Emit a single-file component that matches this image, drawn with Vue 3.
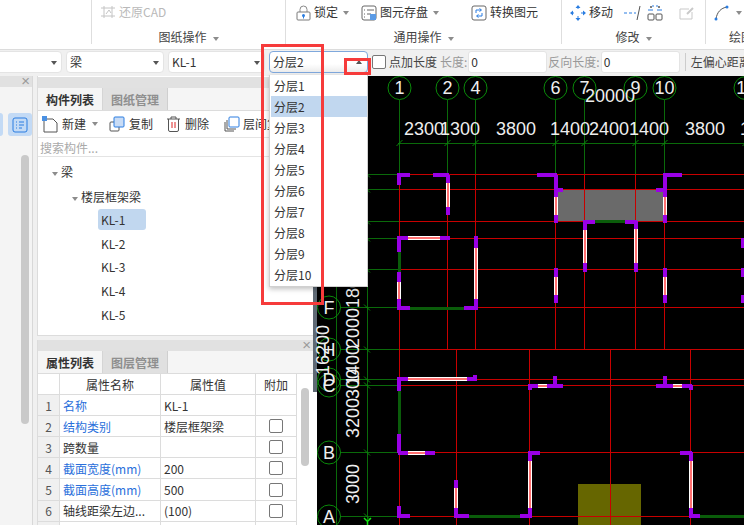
<script setup>
const floors = ['分层1','分层2','分层3','分层4','分层5','分层6','分层7','分层8','分层9','分层10']
const props = [
  { n: 1, name: '名称', value: 'KL-1', blue: true, check: false },
  { n: 2, name: '结构类别', value: '楼层框架梁', blue: true, check: true },
  { n: 3, name: '跨数量', value: '', blue: false, check: true },
  { n: 4, name: '截面宽度(mm)', value: '200', blue: true, check: true },
  { n: 5, name: '截面高度(mm)', value: '500', blue: true, check: true },
  { n: 6, name: '轴线距梁左边...', value: '(100)', blue: false, check: true },
  { n: 7, name: '', value: '', blue: false, check: false },
]
const beams = ['KL-2','KL-3','KL-4','KL-5']

const topAxes = [[399.5,'1'],[447.5,'2'],[475.5,'4'],[555.5,'6'],[584.5,'7'],[635.5,'9'],[664.5,'10'],[745.5,'11']]
const sideAxes = [[307.5,'F'],[349.5,'H'],[379.5,'D'],[385.5,'C'],[452.5,'B'],[516.5,'A']]
const hLines = [174.5,189.5,221.5,238.5,269.5,307.5,349.5,379.5,385.5,452.5,516.5]
const redV = [[447.5,175,350],[475.5,175,350],[555.5,175,350],[584.5,175,350],[635.5,175,350],[664.5,175,350],[399.5,175,525],[456.5,350,525],[529.5,350,525],[610.5,350,525],[690.5,350,525]]
const dims = [[404,'2300'],[440,'1300'],[496,'3800'],[550,'1400'],[589,'2400'],[629,'1400'],[685,'3800'],[740,'1']]
const sideDims = [[352,288,'1800'],[352,328,'2000'],[352,365,'1400'],[352,384,'300'],[352,418,'3200'],[352,484,'3000'],[322,350,'16200']]

const P = (a,b,c,d) => ({ a,b,c,d,t:'p' })
const W = (a,b,c,d) => ({ a,b,c,d,t:'w' })
const G = (a,b,c,d) => ({ a,b,c,d,t:'g' })
const walls = [
  G(399,252,399,272), G(410,308,464,308), G(595,221.5,625,221.5), G(399,391,399,434), G(469,516,520,516), G(700,516,744,516),
  W(447.5,183,447.5,207), W(555.5,197,555.5,215), W(664.5,197,664.5,215), W(584.5,230,584.5,263), W(635.5,229,635.5,263),
  W(408,238,440,238), W(475.5,248,475.5,299), W(399,282,399,299), W(555.5,277,555.5,295), W(664.5,277,664.5,295),
  W(408,379,467,379), W(408,452.5,425,452.5), W(456,488,456,508), W(529.5,461,529.5,508), W(690.5,461,690.5,508),
  W(538,385.5,547,385.5), W(673,385.5,682,385.5),
  P(397,175,410,175), P(399,175,399,185), P(433,175,449,175), P(447.5,175,447.5,183), P(447.5,207,447.5,215),
  P(537,175,557,175), P(555.5,175,555.5,197), P(555,189.5,563,189.5), P(555.5,215,555.5,223),
  P(663,175,682,175), P(664.5,175,664.5,197), P(656,189.5,666,189.5), P(664.5,215,664.5,223),
  P(583,221.5,595,221.5), P(625,221.5,637,221.5), P(584.5,221,584.5,230), P(584.5,263,584.5,272), P(635.5,221,635.5,229), P(635.5,263,635.5,272),
  P(397,238,408,238), P(440,238,450,238), P(399,238,399,252), P(399,272,399,282), P(399,299,399,310), P(397,308,410,308), P(464,308,477,308),
  P(475.5,236,475.5,248), P(475.5,299,475.5,310), P(555.5,268,555.5,277), P(555.5,295,555.5,303), P(664.5,268,664.5,277), P(664.5,295,664.5,303),
  P(743,238,743,248), P(743,268,743,277), P(743,295,743,303),
  P(397,379,408,379), P(467,379,477,379), P(475,375,475,379), P(399,377,399,391), P(399,434,399,453), P(398,452.5,408,452.5), P(425,452.5,435,452.5),
  P(528,385.5,538,385.5), P(547,385.5,563,385.5), P(555,376,555,385), P(529.5,385,529.5,390),
  P(656,385.5,673,385.5), P(682,385.5,692,385.5), P(664.5,376,664.5,385), P(690.5,385,690.5,390),
  P(399,506,399,518), P(398,516,410,516), P(456,480,456,488), P(456,508,456,518), P(455,516,469,516), P(520,516,532,516),
  P(528,452.5,540,452.5), P(529.5,452,529.5,461), P(529.5,508,529.5,518),
  P(680,452.5,692,452.5), P(690.5,452,690.5,461), P(690.5,508,690.5,518), P(689,516,700,516),
]
</script>

<template>
  <div class="page">
    <header class="ribbon">
      <section class="group g1"></section>
      <section class="group g2">
        <div class="tools">
          <span class="tool muted">
            <svg width="16" height="14" viewBox="0 0 16 14"><path d="M1 3h14M4 1v12M1 11h14M12 1v12" fill="none" stroke="#c4c4c4"/><path d="M6 9l3-4 2 3" fill="none" stroke="#c4c4c4"/></svg>
            还原CAD
          </span>
        </div>
        <div class="glabel">图纸操作<i class="tri"></i></div>
      </section>
      <section class="group g3">
        <div class="tools">
          <span class="tool t-lock">
            <svg width="15" height="16" viewBox="0 0 15 16"><path d="M4 7V4.500a3.500 3.500 0 0 1 7 0V7" fill="none" stroke="#8a8a8a"/><rect x="1" y="7" width="13" height="8" rx="1" fill="#fff" stroke="#7a7a7a"/><circle cx="7.500" cy="10.500" r="1.500" fill="#2a7de1"/><path d="M7.500 11v2.500" stroke="#2a7de1"/></svg>
            锁定<i class="tri"></i>
          </span>
          <span class="tool t-save">
            <svg width="16" height="16" viewBox="0 0 16 16"><rect x="1" y="1" width="14" height="14" rx="2" fill="#fff" stroke="#666"/><path d="M3 5h1M6 5h7M3 9h1M6 9h4M3 12h1" stroke="#666"/><rect x="9" y="9" width="6" height="6" fill="#5b9be6"/></svg>
            图元存盘<i class="tri"></i>
          </span>
          <span class="tool t-conv">
            <svg width="16" height="16" viewBox="0 0 16 16"><rect x="1" y="1" width="14" height="14" rx="2" fill="#fff" stroke="#666"/><path d="M5 8V5h5M8.500 3.500L10.500 5 8.500 6.500M11 8v3H6M7.500 9.500L5.500 11l2 1.500" fill="none" stroke="#2a7de1"/></svg>
            转换图元
          </span>
        </div>
        <div class="glabel">通用操作<i class="tri"></i></div>
      </section>
      <section class="group g4">
        <div class="tools">
          <span class="tool t-move">
            <svg width="16" height="16" viewBox="0 0 16 16"><path d="M8 2v3M8 11v3M2 8h3M11 8h3" stroke="#2a7de1" stroke-dasharray="2 1"/><path d="M8 0l2.500 3h-5zM8 16l2.500-3h-5zM0 8l3-2.500v5zM16 8l-3-2.500v5z" fill="#2a7de1"/></svg>
            移动
          </span>
          <svg class="t-trim" width="17" height="16" viewBox="0 0 17 16"><path d="M0 8h3M5 8h3M10 8h2" stroke="#2a7de1"/><path d="M16 1L13 15" stroke="#555"/></svg>
          <svg class="t-arr" width="16" height="16" viewBox="0 0 16 16"><rect x="1" y="9" width="6" height="6" rx="1" fill="none" stroke="#555"/><rect x="9" y="9" width="6" height="6" rx="1" fill="none" stroke="#555"/><circle cx="4" cy="2" r="1" fill="#555"/><circle cx="12" cy="2" r="1" fill="#555"/><path d="M1 5h5M10 5h5M6 0v2M10 0v2" stroke="#2a7de1"/></svg>
          <svg class="t-note" width="16" height="14" viewBox="0 0 16 14"><path d="M10 3H1v10h12V6" fill="none" stroke="#c9c9c9"/><path d="M8 8l6-6" stroke="#c9c9c9" stroke-width="2"/></svg>
        </div>
        <div class="glabel">修改<i class="tri"></i></div>
      </section>
      <section class="group g5">
        <div class="tools">
          <svg width="16" height="16" viewBox="0 0 16 16"><path d="M2 14C3 7 7 3 13 2" fill="none" stroke="#555"/><circle cx="2" cy="14" r="1.500" fill="#2a7de1"/><circle cx="13" cy="2" r="1.500" fill="#2a7de1"/></svg>
          <i class="tri"></i>
        </div>
        <div class="glabel left">绘图</div>
      </section>
    </header>

    <div class="optbar">
      <div class="sel s0"><i class="tri dark"></i></div>
      <div class="sel s1">梁<i class="tri dark"></i></div>
      <div class="sel s2">KL-1<i class="tri dark"></i></div>
      <div class="sel s3">分层2<i class="tri dark up"></i></div>
      <span class="chk optchk"></span>
      <span class="o-text">点加长度</span>
      <span class="o-gray">长度:</span>
      <div class="num">0</div>
      <span class="o-gray">反向长度:</span>
      <div class="num">0</div>
      <span class="osep"></span>
      <span class="o-text">左偏心距离</span>
    </div>

    <main class="main">
      <aside class="panel-a">
        <div class="phead"><span class="x">×</span></div>
        <div class="a-tools"><span class="a-btn edge"></span><span class="a-btn">
          <svg width="16" height="16" viewBox="0 0 16 16"><rect x="1" y="1" width="14" height="14" rx="2" fill="none" stroke="#2a7de1"/><path d="M4 5h1M7 5h5M4 8h1M7 8h5M4 11h1M7 11h3" stroke="#2a7de1"/></svg>
        </span></div>
        <div class="a-body"><span class="a-thumb"></span></div>
      </aside>

      <div class="col">
        <section class="panel top">
          <div class="phead"></div>
          <div class="tabs"><span class="tab on">构件列表</span><span class="tab">图纸管理</span></div>
          <div class="ptools">
            <span class="pt pt-new">
              <svg width="17" height="17" viewBox="0 0 17 17"><path d="M2 3h9l4 4v9H2z" fill="#fff" stroke="#555"/><rect x="0" y="0" width="5" height="5" fill="#4a90e2"/></svg>
              新建<i class="tri"></i>
            </span>
            <span class="pt pt-copy">
              <svg width="16" height="16" viewBox="0 0 16 16"><rect x="1" y="6" width="9" height="9" rx="1" fill="#fff" stroke="#555"/><rect x="5" y="1" width="10" height="10" rx="1" fill="#c9dcf5" stroke="#2a7de1"/></svg>
              复制
            </span>
            <span class="pt pt-del">
              <svg width="15" height="16" viewBox="0 0 15 16"><path d="M1 3h13M5 3V1h5v2" fill="none" stroke="#555"/><path d="M2.500 3v11a1.500 1.500 0 0 0 1.500 1.500h7a1.500 1.500 0 0 0 1.500-1.500V3" fill="none" stroke="#555"/><path d="M6 6v6M9 6v6" stroke="#d22"/></svg>
              删除
            </span>
            <span class="pt pt-layer">
              <svg width="16" height="16" viewBox="0 0 16 16"><path d="M1 6v9h9" fill="none" stroke="#555"/><path d="M3 4v9h9" fill="none" stroke="#555"/><rect x="5" y="1" width="10" height="10" rx="1" fill="#fff" stroke="#2a7de1"/></svg>
              层间复制
            </span>
          </div>
          <div class="search">搜索构件...</div>
          <div class="tree">
            <div class="node n1"><i class="tri"></i>梁</div>
            <div class="node n2"><i class="tri"></i>楼层框架梁</div>
            <div class="node n3 sel-node"><span>KL-1</span></div>
            <div v-for="b in beams" :key="b" class="node n3"><span>{{ b }}</span></div>
          </div>
        </section>

        <section class="panel bottom">
          <div class="phead"><span class="x">×</span></div>
          <div class="tabs"><span class="tab on">属性列表</span><span class="tab">图层管理</span></div>
          <div class="tablewrap">
            <div class="ptable">
              <div class="row head">
                <span class="c idx"></span><span class="c name">属性名称</span><span class="c val">属性值</span><span class="c add txt">附加</span>
              </div>
              <div v-for="p in props" :key="p.n" class="row">
                <span class="c idx">{{ p.n }}</span>
                <span class="c name left" :class="{ blue: p.blue }">{{ p.name }}</span>
                <span class="c val left">{{ p.value }}</span>
                <span class="c add"><span v-if="p.check" class="chk"></span></span>
              </div>
            </div>
            <div class="vbar"><span class="vthumb"></span></div>
          </div>
        </section>
      </div>

      <div class="strip"><span class="strip-top"></span></div>

      <div class="canvas">
        <svg class="cad" width="427" height="449" viewBox="317 76 427 449">
          <rect x="557" y="190" width="107" height="31" fill="#6a6a6a" />
          <rect x="578" y="484" width="63" height="41" fill="#666600" />

          <g stroke="#0a6a0a" stroke-width="1" shape-rendering="crispEdges">
            <path d="M336.500 76V525M367.500 76V525M398 143.500H744" />
            <line v-for="a in topAxes" :key="'tv'+a[1]" :x1="a[0]" :x2="a[0]" y1="100" y2="175" />
            <line v-for="y in hLines" :key="'hg'+y" x1="340" x2="399" :y1="y" :y2="y" />
          </g>
          <g stroke="#0a8a0a" stroke-width="1">
            <line v-for="a in topAxes" :key="'tk'+a[1]" :x1="a[0]-3" y1="146" :x2="a[0]+3" y2="140" />
            <line v-for="y in hLines" :key="'tk2'+y" x1="364" :y1="y-3" x2="370" :y2="y+3" />
            <circle v-for="a in topAxes" :key="'tc'+a[1]" :cx="a[0]" cy="88" r="11.500" fill="none" />
            <circle v-for="a in sideAxes" :key="'sc'+a[1]" cx="329" :cy="a[0]" r="11.500" fill="none" />
          </g>

          <g stroke="#c80000" stroke-width="1" shape-rendering="crispEdges">
            <line v-for="y in hLines" :key="'hr'+y" x1="399" x2="744" :y1="y" :y2="y" />
            <line v-for="(v, i) in redV" :key="'vr'+i" :x1="v[0]" :x2="v[0]" :y1="v[1]" :y2="v[2]" />
          </g>

          <template v-for="(w, i) in walls" :key="'w'+i">
            <line :x1="w.a" :y1="w.b" :x2="w.c" :y2="w.d" :class="'wall-' + w.t" shape-rendering="crispEdges" />
            <line v-if="w.t === 'w'" :x1="w.a" :y1="w.b" :x2="w.c" :y2="w.d" stroke="#ff7070" stroke-width="2" shape-rendering="crispEdges" />
          </template>

          <g class="cadtext">
            <text v-for="a in topAxes" :key="'tt'+a[1]" :x="a[0]" y="94" text-anchor="middle">{{ a[1] }}</text>
            <text v-for="a in sideAxes" :key="'st'+a[1]" x="329" :y="a[0] + 6.500" text-anchor="middle">{{ a[1] }}</text>
            <text x="585" y="102">20000</text>
            <text v-for="(d, i) in dims" :key="'d'+i" :x="d[0]" y="135">{{ d[1] }}</text>
            <text v-for="(d, i) in sideDims" :key="'sd'+i" text-anchor="middle" :transform="`translate(${d[0] + 7} ${d[1]}) rotate(-90)`">{{ d[2] }}</text>
          </g>
          <path d="M364 518l3.500 3.500L371 518M367.500 521.500V525" fill="none" stroke="#12e612" stroke-width="1.500" />
        </svg>
      </div>
    </main>

    <ul class="dropdown">
      <li v-for="f in floors" :key="f" :class="{ active: f === '分层2' }">{{ f }}</li>
    </ul>
    <div class="mark big"></div>
    <div class="mark small"></div>
  </div>
</template>

<style>
html, body { margin: 0; background: #fff; }
</style>

<style scoped>
.page {
  position: relative; width: 744px; height: 525px; overflow: hidden;
  display: flex; flex-direction: column; background: #fff; color: #333;
  font: 12px/1.2 "Noto Sans CJK SC", "Liberation Sans", sans-serif;
}
.tri { display: inline-block; width: 0; height: 0; margin-left: 6px; vertical-align: middle;
  border: 3px solid transparent; border-top: 4px solid #8c8c8c; border-bottom: 0; }
.tri.dark { border-top-color: #555; }
.tri.up { border-top: 0; border-bottom: 4px solid #555; }

.ribbon { height: 49px; flex: none; display: flex; background: #fff; border-bottom: 1px solid #dcdcdc; }
.group { position: relative; height: 44px; display: flex; flex-direction: column; border-right: 1px solid #dedede; box-sizing: border-box; flex: none; }
.g1 { width: 92px; }
.g2 { width: 194px; }
.g3 { width: 276px; }
.g4 { width: 144px; }
.g5 { width: 38px; border-right: 0; }
.tools { height: 25px; flex: none; display: flex; align-items: center; white-space: nowrap; }
.tool { display: inline-flex; align-items: center; gap: 3px; }
.tool .tri { margin-left: 2px; }
.muted { color: #b9b9b9; margin-left: 8px; }
.t-lock { margin-left: 10px; }
.t-save { margin-left: 12px; }
.t-conv { margin-left: 32px; }
.t-move { margin-left: 8px; }
.t-trim { margin-left: 11px; }
.t-arr { margin-left: 6px; }
.t-note { margin-left: 16px; }
.g5 .tools { padding-left: 8px; }
.glabel { text-align: center; color: #444; line-height: 22px; padding-top: 1px; }
.glabel.left { text-align: left; padding-left: 23px; white-space: nowrap; }

.optbar { height: 26px; flex: none; display: flex; align-items: center; background: #f0f0f0; white-space: nowrap; overflow: hidden; padding-bottom: 2px; box-sizing: border-box; }
.sel { position: relative; flex: none; height: 22px; line-height: 20px; box-sizing: border-box; margin-right: 4px; padding-left: 3px;
  background: #fff; border: 1px solid #e4e4e4; border-radius: 4px; }
.sel .tri { position: absolute; right: 4px; top: 9px; margin: 0; }
.s0 { width: 66px; margin-left: -4px; }
.s1 { width: 98px; }
.s2 { width: 97px; }
.s3 { width: 99px; border-color: #7fa8dc; background: linear-gradient(#fff 60%, #ececec); }
.s3 .tri { right: 5px; top: 8px; }
.chk { display: inline-block; box-sizing: border-box; width: 14px; height: 14px; background: #fff; border: 1px solid #777; border-radius: 2px; }
.optchk { flex: none; margin-right: 3px; }
.o-text { color: #444; margin-right: 3px; }
.o-gray { color: #999; margin-right: 1px; }
.num { flex: none; width: 79px; height: 22px; line-height: 20px; box-sizing: border-box; padding-left: 2px; margin-right: 1px; background: #fff; border: 1px solid #e4e4e4; border-radius: 3px; }
.osep { flex: none; width: 1px; height: 18px; background: #ccc; margin: 0 5px 0 4px; }

.main { flex: 1; min-height: 0; display: flex; background: #f0f0f0; }
.phead { position: relative; height: 11px; background: #e1e1e1; }
.x { position: absolute; right: 2px; top: -2px; font: 15px/14px "Liberation Sans", sans-serif; color: #9a9a9a; }
.panel-a { width: 33px; flex: none; background: #f4f4f4; border-right: 1px solid #d8d8d8; box-sizing: border-box; display: flex; flex-direction: column; }
.a-tools { margin-top: 26px; height: 24px; display: flex; gap: 5px; margin-left: -21px; }
.a-btn { width: 24px; height: 23px; background: #c3daf5; border-radius: 3px; display: flex; align-items: center; justify-content: center; flex: none; }
.a-btn.edge { width: 24px; }
.a-body { flex: 1; padding: 18px 0 0 21px; }
.a-thumb { display: block; width: 8px; height: 269px; border-radius: 4px; background: #c9c9c9; }

.col { width: 276px; flex: none; margin-left: 4px; display: flex; flex-direction: column; }
.panel { background: #fff; box-sizing: border-box; border-left: 1px solid #dcdcdc; }
.top { height: 260px; border-bottom: 1px solid #dcdcdc; padding-top: 1px; background: #fff; }
.bottom { margin-top: 4px; flex: 1; min-height: 0; overflow: hidden; }
.tabs { height: 22px; display: flex; background: #f5f5f5; border-bottom: 1px solid #dcdcdc; box-sizing: content-box; }
.tab { width: 65px; line-height: 23px; box-sizing: border-box; text-align: center; font-weight: 700; color: #8f8f8f; background: #e0e0e0; border-right: 1px solid #cfcfcf; }
.tab.on { color: #333; background: #f5f5f5; border-right: 1px solid #d5d5d5; }
.ptools { height: 27px; box-sizing: border-box; display: flex; align-items: center; white-space: nowrap; overflow: hidden; border-bottom: 1px solid #e4e4e4; }
.pt { display: inline-flex; align-items: center; gap: 3px; flex: none; }
.pt-new { margin-left: 4px; }
.pt-new .tri { margin-left: 3px; }
.pt-copy { margin-left: 11px; gap: 4px; }
.pt-del { margin-left: 13px; gap: 4px; }
.pt-layer { margin-left: 15px; }
.search { height: 19px; box-sizing: border-box; line-height: 20px; padding-left: 2px; color: #aaa; border-bottom: 1px solid #e4e4e4; }
.tree { padding-top: 2px; }
.node { height: 24px; line-height: 24px; white-space: nowrap; }
.n1 { padding-left: 14px; height: 25px; line-height: 26px; }
.n1 .tri, .n2 .tri { margin: 0 3px 0 0; }
.n2 { padding-left: 34px; height: 25px; line-height: 26px; }
.n3 { padding-left: 60px; height: 23.700px; }
.n3 span { display: block; width: 45px; height: 21px; line-height: 21px; padding-left: 3px; border-radius: 3px; }
.sel-node span { background: #c1d7ef; }

.tablewrap { display: flex; height: 200px; }
.ptable { width: 259px; flex: none; }
.row { display: flex; height: 21.100px; box-sizing: border-box; border-bottom: 1px solid #dcdcdc; }
.c { display: flex; align-items: center; justify-content: center; box-sizing: border-box; border-right: 1px solid #dcdcdc; white-space: nowrap; overflow: hidden; flex: none; }
.idx, .name, .val, .txt { padding-top: 2px; }
.idx { width: 22px; background: #f0f0f0; color: #555; }
.head .idx { background: #fff; }
.name { width: 101px; }
.val { width: 95px; }
.add { width: 41px; }
.c.left { justify-content: flex-start; padding-left: 3px; }
.blue { color: #2a6fdb; }
.vbar { flex: 1; padding: 14px 0 0 4px; background: #fff; }
.vthumb { display: block; width: 8px; height: 78px; border-radius: 4px; background: #c9c9c9; }

.strip { width: 4px; flex: none; background: #fff; }
.strip-top { display: block; height: 316px; background: #5f6a75; }
.canvas { flex: 1; background: #000; min-width: 0; }
.cad { display: block; overflow: visible; }
.wall-p { stroke: #9a00e6; stroke-width: 4; }
.wall-w { stroke: #fff; stroke-width: 4; }
.wall-g { stroke: #0a5c0a; stroke-width: 3; }
.cadtext text { fill: #eee; font: 18px "Liberation Sans", sans-serif; }

.dropdown { position: absolute; left: 269px; top: 75px; width: 99px; height: 212px; margin: 0; padding: 0 0 0 1px; box-sizing: border-box; list-style: none;
  background: #fff; border: 1px solid #d0d0d0; border-top: 0; box-shadow: 0 2px 5px rgba(0,0,0,.25); z-index: 3; }
.dropdown li { height: 21px; line-height: 21px; padding-left: 3px; }
.dropdown li.active { background: #c1d7ef; }
.mark { position: absolute; box-sizing: border-box; border: 3px solid #f63b3b; z-index: 4; }
.mark.big { left: 261px; top: 44px; width: 63px; height: 261px; }
.mark.small { left: 344px; top: 58px; width: 27px; height: 17px; }
</style>
